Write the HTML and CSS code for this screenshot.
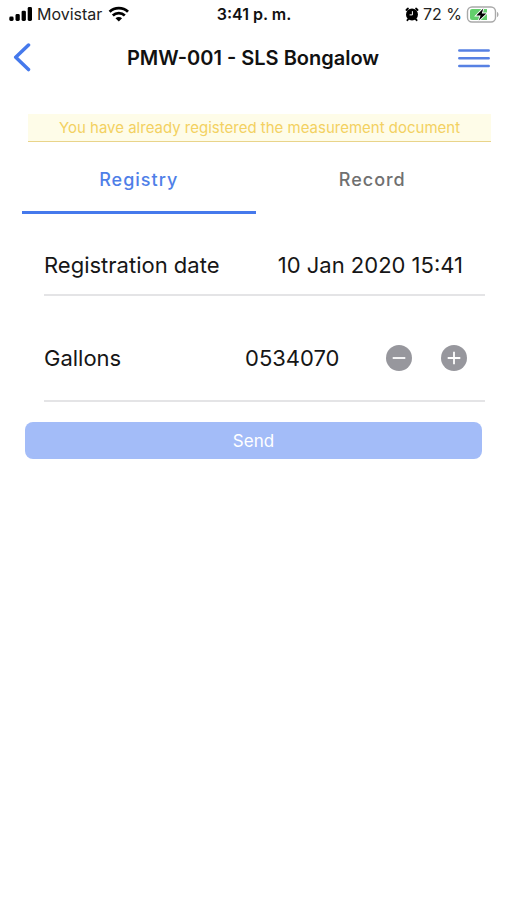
FILE: index.html
```html
<!DOCTYPE html>
<html lang="en">
<head>
<meta charset="utf-8">
<meta name="viewport" content="width=device-width, initial-scale=1">
<title>PMW-001 - SLS Bongalow</title>
<link rel="stylesheet" href="styles.css">
</head>
<body>
<div class="status">
  <div class="status-side">
    <svg width="24" height="16" viewBox="0 0 24 16" aria-hidden="true">
      <rect x="0.300" y="10.500" width="4.300" height="4.500" rx="1.400"/>
      <rect x="6.500" y="8" width="4.300" height="7" rx="1.400"/>
      <rect x="12.600" y="4.700" width="4.300" height="10.300" rx="1.400"/>
      <rect x="18.700" y="1" width="4.300" height="14" rx="1.400"/>
    </svg>
    <span>Movistar</span>
    <svg width="24" height="16" viewBox="0 0 24 16" aria-hidden="true">
      <g fill="none" stroke="#000" stroke-width="2.800">
        <path d="M3.600 5.800C8.600 1 17 1 22 5.800"/>
        <path d="M6.800 9.400C10.100 6.300 15.500 6.300 18.800 9.400"/>
      </g>
      <path d="M12.800 15.600 9.500 12.200C11.400 10.500 14.200 10.500 16.100 12.200Z"/>
    </svg>
  </div>
  <span class="clock">3:41 p. m.</span>
  <div class="status-side status-end">
    <svg width="14" height="15" viewBox="0 0 14 15" aria-hidden="true">
      <path d="M3.400 12 2.400 13.200M10.600 12l1 1.200M1.400 3 3 1.500M12.600 3 11 1.500" stroke="#000" stroke-width="1.800" stroke-linecap="round"/>
      <circle cx="7" cy="7.400" r="6"/>
      <path d="M7.400 4.200V7.900H4.600" fill="none" stroke="#fff" stroke-width="1"/>
    </svg>
    <span>72 %</span>
    <svg width="33" height="17" viewBox="0 0 33 17" aria-hidden="true">
      <rect x="1.500" y="1" width="28" height="15" rx="4.500" fill="#fff" stroke="#a9a9a9" stroke-width="1.400"/>
      <path d="M31 6v5c2-.6 2-4.400 0-5Z" fill="#a9a9a9"/>
      <path d="M6 3h15v11H6a2 2 0 0 1-2-2V5a2 2 0 0 1 2-2Z" fill="#63cf6c"/>
      <path d="M17.300 2.500 10.300 9.500h4.300L12.800 14.500l7.500-7h-4.500Z" fill="none" stroke="#fff" stroke-width="1.800"/>
      <path d="M17.300 2.500 10.300 9.500h4.300L12.800 14.500l7.500-7h-4.500Z"/>
    </svg>
  </div>
</div>

<header class="header">
  <button class="icon-button" type="button" aria-label="Back">
    <svg width="20" height="30" viewBox="0 0 20 30" aria-hidden="true">
      <path d="M16.500 2 3.700 14.300l12.800 12.300" fill="none" stroke="#4579ec" stroke-width="3.500" stroke-linecap="round" stroke-linejoin="round"/>
    </svg>
  </button>
  <h1 class="title">PMW-001 - SLS Bongalow</h1>
  <button class="icon-button" type="button" aria-label="Menu">
    <svg width="32" height="20" viewBox="0 0 32 20" aria-hidden="true">
      <path d="M1.300 2.400h29.400M1.300 10.200h29.400M1.300 18h29.400" stroke="#5781e3" stroke-width="2.500" stroke-linecap="round"/>
    </svg>
  </button>
</header>

<main>
  <p class="notice" role="status">You have already registered the measurement document</p>

  <nav class="tabs">
    <a class="tab tab-active" href="#registry" aria-current="page">Registry</a>
    <a class="tab" href="#record">Record</a>
  </nav>

  <form class="form" id="registry">
    <div class="row">
      <span>Registration date</span>
      <time class="date" datetime="2020-01-10T15:41">10 Jan 2020 15:41</time>
    </div>
    <div class="row row-tall">
      <label for="gallons">Gallons</label>
      <div class="stepper">
        <input class="amount" id="gallons" type="text" inputmode="numeric" value="0534070">
        <button type="button" aria-label="Decrease">
          <svg width="26" height="26" viewBox="0 0 26 26" aria-hidden="true">
            <circle cx="13" cy="13" r="13" fill="#97979d"/>
            <path d="M6.700 13h12.600" stroke="#fff" stroke-width="1.800"/>
          </svg>
        </button>
        <button type="button" aria-label="Increase">
          <svg width="26" height="26" viewBox="0 0 26 26" aria-hidden="true">
            <circle cx="13" cy="13" r="13" fill="#97979d"/>
            <path d="M6.700 13h12.600M13 6.700v12.600" stroke="#fff" stroke-width="1.800"/>
          </svg>
        </button>
      </div>
    </div>
    <button class="send" type="submit">Send</button>
  </form>
</main>
</body>
</html>
```
FILE: styles.css
```css
* {
  box-sizing: border-box;
}

body {
  margin: 0;
  background: #fff;
  color: #161616;
  font-family: Inter, "Liberation Sans", sans-serif;
}

button,
input {
  padding: 0;
  border: 0;
  background: none;
  color: inherit;
  font: inherit;
}

svg {
  display: block;
  flex: none;
}

.status {
  display: grid;
  grid-template-columns: 1fr auto 1fr;
  align-items: center;
  height: 28px;
  padding: 0 8px 0 9px;
  color: #222;
  font-size: 16px;
}

.status-side {
  display: flex;
  align-items: center;
  gap: 4px;
}

.status-end {
  justify-content: flex-end;
}

.clock {
  color: #111;
  font-weight: 600;
}

.header {
  display: flex;
  align-items: center;
  justify-content: space-between;
  height: 60px;
  padding: 0 17px 0 12px;
}

.icon-button {
  display: flex;
  align-items: center;
  min-width: 36px;
  height: 40px;
}

.icon-button:last-child {
  min-width: 32px;
}

.title {
  margin: 0;
  color: #111;
  font-size: 20px;
  font-weight: 600;
}

.notice {
  margin: 26px 16px 0 28px;
  border-bottom: 1px solid #e9d48a;
  background: #fefce8;
  color: #f3d161;
  font-size: 15px;
  line-height: 27px;
  text-align: center;
}

.tabs {
  display: grid;
  grid-template-columns: 1fr 1fr;
  margin: 0 18px 0 22px;
}

.tab {
  padding: 25px 0 18px;
  border-bottom: 3px solid transparent;
  color: #707070;
  font-size: 18px;
  font-weight: 500;
  letter-spacing: 1px;
  line-height: 26px;
  text-align: center;
  text-decoration: none;
}

.tab-active {
  border-color: #4579ec;
  color: #4f7fe8;
}

.form {
  padding: 22px 22px 0 44px;
  font-size: 22px;
}

.row {
  display: flex;
  align-items: center;
  justify-content: space-between;
  height: 60px;
  padding-right: 18px;
  border-bottom: 2px solid #e4e4e6;
}

.date {
  padding-right: 4px;
}

.row-tall {
  height: 106px;
  padding-top: 20px;
}

.stepper {
  display: flex;
  align-items: center;
  gap: 29px;
}

.amount {
  width: 112px;
}

.send {
  display: block;
  width: calc(100% + 16px);
  height: 37px;
  margin: 20px 0 0 -19px;
  border-radius: 8px;
  background: #a3bcf8;
  color: #fff;
  font-size: 17px;
}
```
